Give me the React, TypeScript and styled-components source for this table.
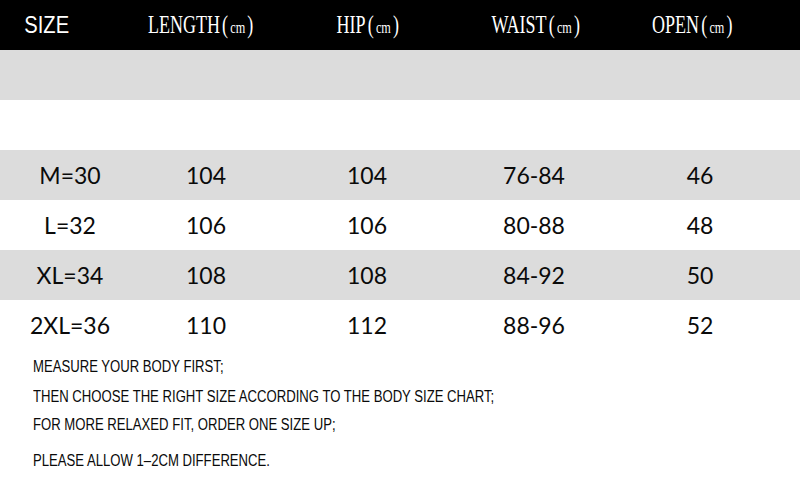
import styled, { createGlobalStyle } from 'styled-components';

const GlobalStyle = createGlobalStyle`
  html, body {
    margin: 0;
    padding: 0;
    background: #ffffff;
  }
  body {
    width: 800px;
    height: 500px;
    overflow: hidden;
  }
`;

const Chart = styled.div`
  width: 800px;
  height: 500px;
  background: #ffffff;
  display: flex;
  flex-direction: column;
`;

const HeaderRow = styled.div`
  height: 50px;
  background: #000000;
  color: #ffffff;
  display: grid;
  grid-template-columns: 94px 216px 118px 218px 94px;
  align-items: center;
`;

const HeadCell = styled.div`
  display: flex;
  justify-content: center;
  align-items: center;
`;

const SizeLabel = styled.span`
  font-family: 'Liberation Sans', Arial, sans-serif;
  font-size: 24px;
  display: inline-block;
  transform: scaleX(0.84);
`;

const HeadLabel = styled.span`
  font-family: 'Liberation Serif', 'Times New Roman', serif;
  font-size: 25px;
  display: inline-block;
  white-space: nowrap;
  transform: scaleX(0.72);
`;

const Paren = styled.span`
  margin: 0 3px;
`;

const Unit = styled.span`
  font-size: 17px;
`;

const Band = styled.div<{ $shade: boolean }>`
  height: 50px;
  background: ${p => (p.$shade ? '#dcdcdc' : '#ffffff')};
`;

const DataRow = styled.div<{ $shade: boolean }>`
  height: 50px;
  background: ${p => (p.$shade ? '#dcdcdc' : '#ffffff')};
  display: grid;
  grid-template-columns: 140px 132px 190px 144px 188px;
  align-items: center;
  font-family: Lato, 'Open Sans', sans-serif;
  font-size: 23px;
  color: #0a0a0a;
`;

const Cell = styled.div`
  text-align: center;
`;

const Notes = styled.div`
  padding: 3px 0 0 33px;
  display: flex;
  flex-direction: column;
  align-items: flex-start;
  font-family: 'Liberation Sans', Arial, sans-serif;
  font-size: 16px;
  color: #0a0a0a;
`;

const Note = styled.div<{ $gap?: number }>`
  height: 28px;
  line-height: 28px;
  white-space: nowrap;
  margin-top: ${p => p.$gap ?? 0}px;
  transform: scaleX(0.82);
  transform-origin: left center;
`;

const headers = ['LENGTH', 'HIP', 'WAIST', 'OPEN'];

const rows = [
  ['M=30', '104', '104', '76-84', '46'],
  ['L=32', '106', '106', '80-88', '48'],
  ['XL=34', '108', '108', '84-92', '50'],
  ['2XL=36', '110', '112', '88-96', '52'],
];

export default function App() {
  return (
    <>
      <GlobalStyle />
      <Chart>
        <HeaderRow>
          <HeadCell>
            <SizeLabel>SIZE</SizeLabel>
          </HeadCell>
          {headers.map(h => (
            <HeadCell key={h}>
              <HeadLabel>
                {h}
                <Paren>(</Paren>
                <Unit>cm</Unit>
                <Paren>)</Paren>
              </HeadLabel>
            </HeadCell>
          ))}
        </HeaderRow>
        <Band $shade />
        <Band $shade={false} />
        {rows.map((r, i) => (
          <DataRow key={r[0]} $shade={i % 2 === 0}>
            {r.map((v, j) => (
              <Cell key={j}>{v}</Cell>
            ))}
          </DataRow>
        ))}
        <Notes>
          <Note>MEASURE YOUR BODY FIRST;</Note>
          <Note $gap={2}>THEN CHOOSE THE RIGHT SIZE ACCORDING TO THE BODY SIZE CHART;</Note>
          <Note>FOR MORE RELAXED FIT, ORDER ONE SIZE UP;</Note>
          <Note $gap={8}>PLEASE ALLOW 1–2CM DIFFERENCE.</Note>
        </Notes>
      </Chart>
    </>
  );
}
